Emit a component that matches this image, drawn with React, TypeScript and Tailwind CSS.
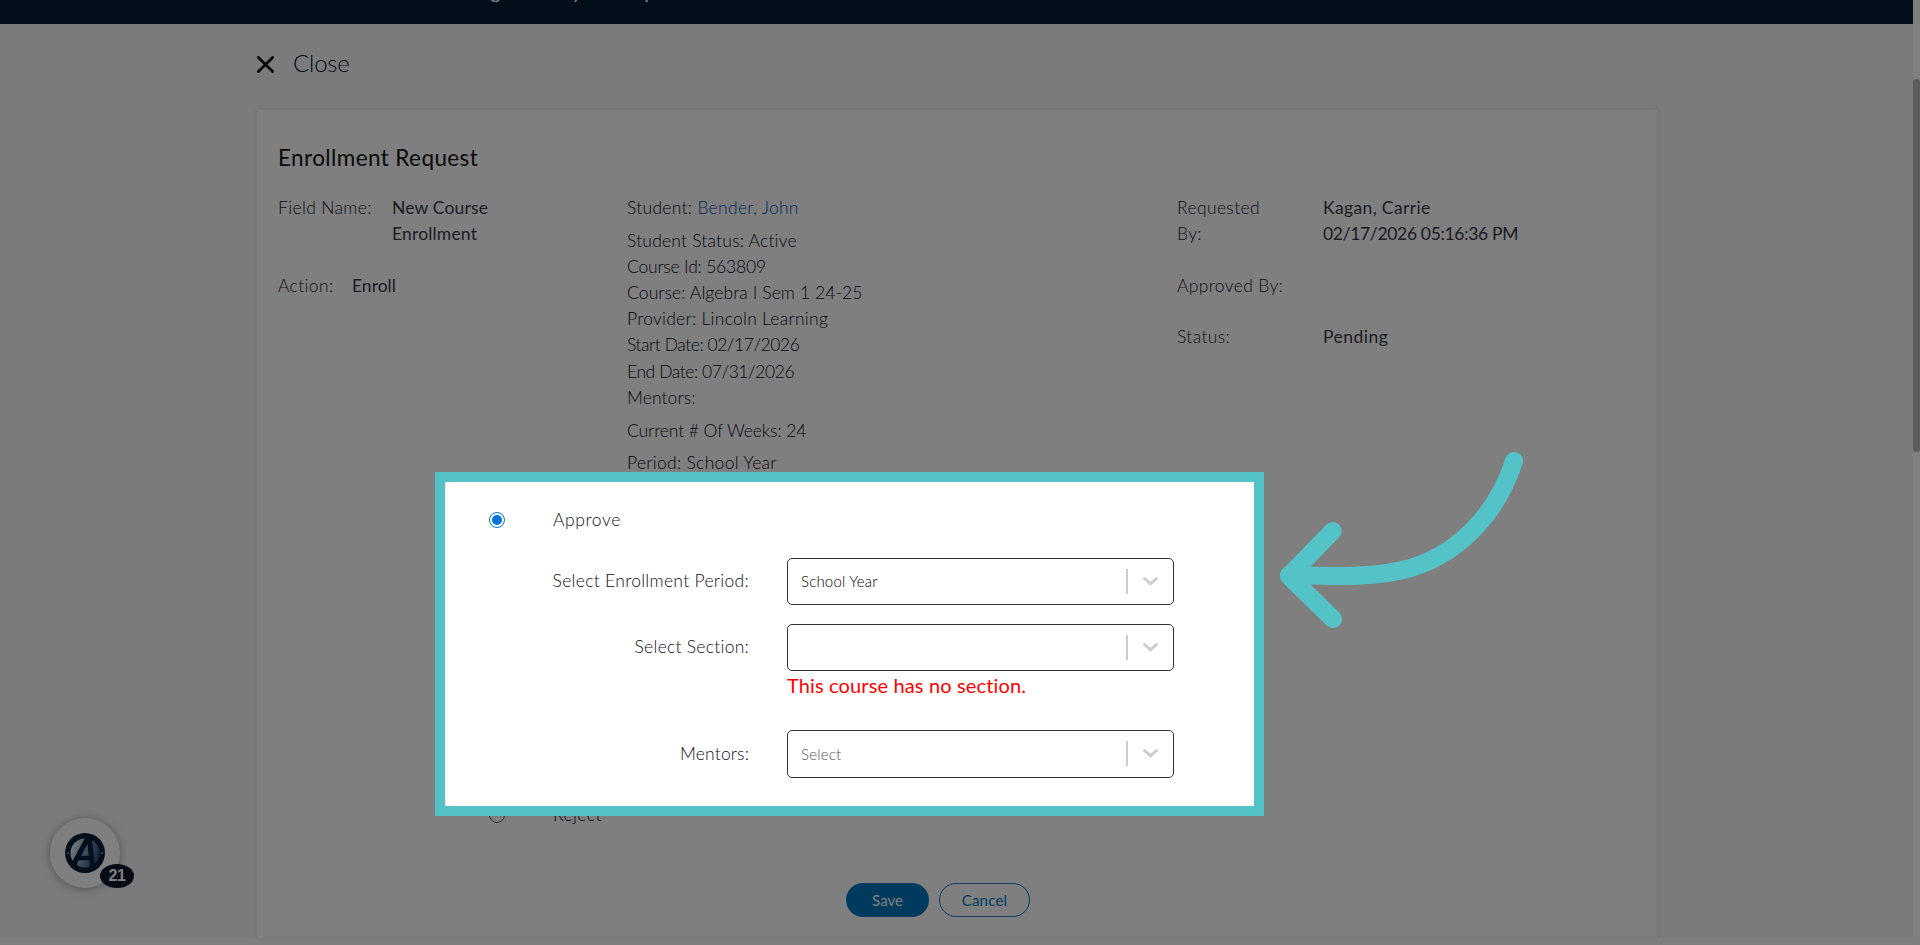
import React from 'react';
import type { FC, ReactNode } from 'react';

interface LabelProps {
  children: ReactNode;
}

interface SelectBoxProps {
  value?: string;
  muted?: boolean;
  heightClass: string;
}

const courseDetails = [
  { text: 'Student Status: Active', spacing: 'mt-[7px] tracking-[0.2px]' },
  { text: 'Course Id: 563809', spacing: 'tracking-[-0.2px]' },
  { text: 'Course: Algebra I Sem 1 24-25', spacing: 'tracking-[0.1px]' },
  { text: 'Provider: Lincoln Learning', spacing: 'tracking-[0.27px]' },
  { text: 'Start Date: 02/17/2026', spacing: 'tracking-[-0.45px]' },
  { text: 'End Date: 07/31/2026', spacing: 'tracking-[-0.43px]' },
  { text: 'Mentors:', spacing: 'tracking-[0.1px]' },
  { text: 'Current # Of Weeks: 24', spacing: 'mt-[7px] tracking-[-0.1px]' },
  { text: 'Period: School Year', spacing: 'mt-[6px] tracking-[0.3px]' },
];

const Label: FC<LabelProps> = ({ children }) => (
  <span className="font-light tracking-[0.36px] text-[#1c1c2c]">{children}</span>
);

const SelectBox: FC<SelectBoxProps> = ({ value, muted, heightClass }) => (
  <div className={`flex w-[387px] items-center rounded-[5px] border border-[#333] bg-white ${heightClass}`}>
    <span className={`flex-1 pl-[13px] text-[15px] leading-5 tracking-[0.2px] ${muted ? 'text-[#555]' : 'text-black'}`}>{value}</span>
    <span className="h-[25px] w-[2px] bg-[#ccc]" />
    <svg className="mr-[15px] ml-[15px] h-[9px] w-[15px]" viewBox="0 0 15 9" fill="none" stroke="#ccc">
      <path d="M1.5 1.5l6 5.4 6-5.4" strokeWidth="2.8" strokeLinecap="round" />
    </svg>
  </div>
);

const Header: FC = () => (
  <header className="flex h-6 shrink-0 items-end overflow-hidden bg-[#041e36] pl-[441px]">
    <span className="mb-[21px] text-[20px] leading-6 whitespace-pre text-white">Management System Updates</span>
  </header>
);

const RequestInfo: FC = () => (
  <div className="flex px-[21px] pt-5 text-[17.5px] leading-[26.1px] text-[#3a3a48]">
    <div className="w-[349px]">
      <div className="flex">
        <div className="w-[114px]"><Label>Field Name:</Label></div>
        <div className="w-[140px] tracking-[0.17px]">New Course Enrollment</div>
      </div>
      <div className="mt-[26px] flex">
        <div className="w-[74px]"><Label>Action:</Label></div>
        <div>Enroll</div>
      </div>
    </div>
    <div className="w-[550px] font-light text-[#0c0c1a]">
      <p className="tracking-[0.29px]">Student: <a className="text-[#0050b4]">Bender, John</a></p>
      {courseDetails.map((row) => (
        <p key={row.text} className={row.spacing}>{row.text}</p>
      ))}
    </div>
    <div>
      <div className="flex">
        <div className="w-[146px]"><Label>Requested<br />By:</Label></div>
        <div>
          <p className="tracking-[0.37px]">Kagan, Carrie</p>
          <p className="tracking-[-0.33px]">02/17/2026 05:16:36 PM</p>
        </div>
      </div>
      <div className="mt-[26px]"><Label>Approved By:</Label></div>
      <div className="mt-[25px] flex">
        <div className="w-[146px]"><Label>Status:</Label></div>
        <div className="tracking-[0.5px]">Pending</div>
      </div>
    </div>
  </div>
);

const DecisionForm: FC = () => (
  <div className="mt-[31px] text-[17.5px] leading-[26px] font-light text-[#0e0e22]">
    <div className="flex h-[26px] items-center pl-[232px]">
      <span className="flex h-4 w-4 items-center justify-center rounded-full border border-[#0075d8] bg-white">
        <span className="h-[10px] w-[10px] rounded-full bg-[#0075d8]" />
      </span>
      <span className="ml-12 tracking-[0.6px]">Approve</span>
    </div>
    <div className="mt-[25px] flex items-center gap-[38px]">
      <span className="w-[492px] text-right tracking-[0.3px]">Select Enrollment Period:</span>
      <SelectBox value="School Year" heightClass="h-[47px]" />
    </div>
    <div className="mt-[19px] flex items-center gap-[38px]">
      <span className="w-[492px] text-right tracking-[0.26px]">Select Section:</span>
      <SelectBox heightClass="h-[47px]" />
    </div>
    <p className="pl-[530px] text-[20px] leading-[28px] font-normal tracking-[0.14px] text-[#f00]">This course has no section.</p>
    <div className="mt-[31px] flex items-center gap-[38px]">
      <span className="w-[492px] text-right tracking-[0.15px]">Mentors:</span>
      <SelectBox value="Select" muted heightClass="h-[48px]" />
    </div>
    <div className="mt-[24px] flex h-[26px] items-center pl-[232px]">
      <span className="h-4 w-4 rounded-full border border-[#555] bg-white" />
      <span className="ml-12 tracking-[0.4px]">Reject</span>
    </div>
  </div>
);

const ChatBadge: FC = () => (
  <div className="absolute top-[818px] left-[50px] flex h-[70px] w-[70px] items-center justify-center rounded-full bg-white shadow-[0_1px_8px_rgba(0,0,0,0.35)]">
    <svg className="h-10 w-10" viewBox="0 0 40 40">
      <defs>
        <linearGradient id="disc" x1="0" y1="0.2" x2="1" y2="0.6">
          <stop offset="0" stopColor="#fff" />
          <stop offset="0.45" stopColor="#8ea6c4" />
          <stop offset="1" stopColor="#1f4a80" />
        </linearGradient>
      </defs>
      <circle cx="20" cy="20" r="20" fill="#041e36" />
      <circle cx="20" cy="20" r="14.5" fill="url(#disc)" />
      <path d="M9 31L22 6.5h2.5L27.5 34" fill="none" stroke="#041e36" strokeWidth="5" />
      <path d="M14 25h12" stroke="#041e36" strokeWidth="4.5" />
      <circle cx="3" cy="20" r="0.9" fill="#8ea6c4" />
      <circle cx="37" cy="20" r="0.9" fill="#8ea6c4" />
    </svg>
    <span className="absolute top-[46px] left-[50px] flex h-6 w-[34px] items-center justify-center rounded-[50%] bg-[#10152a] font-['Liberation_Sans',sans-serif] text-[16px] font-bold tracking-[-0.5px] text-white">21</span>
  </div>
);

const App: FC = () => {
  return (
    <div className="relative flex h-[945px] w-[1920px] overflow-hidden bg-white font-['Lato','Open_Sans',sans-serif] [font-variant-ligatures:none]">
      <div className="flex h-[938px] w-[1913px] flex-col bg-[#f4f6fa]">
        <Header />
        <div className="flex h-[86px] shrink-0 items-center pl-[257px]">
          <svg className="mt-[-5px] h-[17px] w-[17px]" viewBox="0 0 17 17" stroke="#111" strokeWidth="2.8" strokeLinecap="round">
            <path d="M1.4 1.4l14.2 14.2M15.6 1.4L1.4 15.6" />
          </svg>
          <span className="mt-[-9px] ml-[19px] text-[24px] font-light tracking-[-0.2px] text-[#0e0e22]">Close</span>
        </div>
        <main className="ml-[257px] w-[1400px] flex-1 bg-white shadow-[0_0_5px_rgba(0,0,0,0.1)]">
          <h1 className="pt-[31px] pl-[21px] text-[22.5px] leading-[34px] tracking-[0.4px] text-[#111]">Enrollment Request</h1>
          <RequestInfo />
          <DecisionForm />
          <div className="mt-[55px] flex gap-[10px] pl-[589px] text-[15px]">
            <button className="h-[34px] w-[83px] rounded-full bg-[#0077be] text-white">Save</button>
            <button className="h-[34px] w-[91px] rounded-full border border-[#0077be] tracking-[0.2px] text-[#0077be]">Cancel</button>
          </div>
        </main>
      </div>
      <div className="w-[7px] pt-[79px]">
        <div className="h-[373px] rounded-full bg-[#b8b8b8]" />
      </div>
      <ChatBadge />
      {/* highlighted area, everything around it is dimmed by the shadow */}
      <div className="pointer-events-none absolute top-[472px] left-[435px] h-[344px] w-[829px] border-[10px] border-[#54c3c7] shadow-[0_0_0_2000px_rgba(0,0,0,0.5)]" />
      <svg className="absolute top-[430px] left-[1240px] h-[220px] w-[320px]" viewBox="0 0 960 660" fill="none" stroke="#54c3c7" strokeWidth="54" strokeLinecap="round" strokeLinejoin="round">
        <path d="M822 93C772 250 650 385 480 422C385 443 270 439 148 434" />
        <path d="M278 303L147 438l132 129" />
      </svg>
    </div>
  );
};

export default App;
